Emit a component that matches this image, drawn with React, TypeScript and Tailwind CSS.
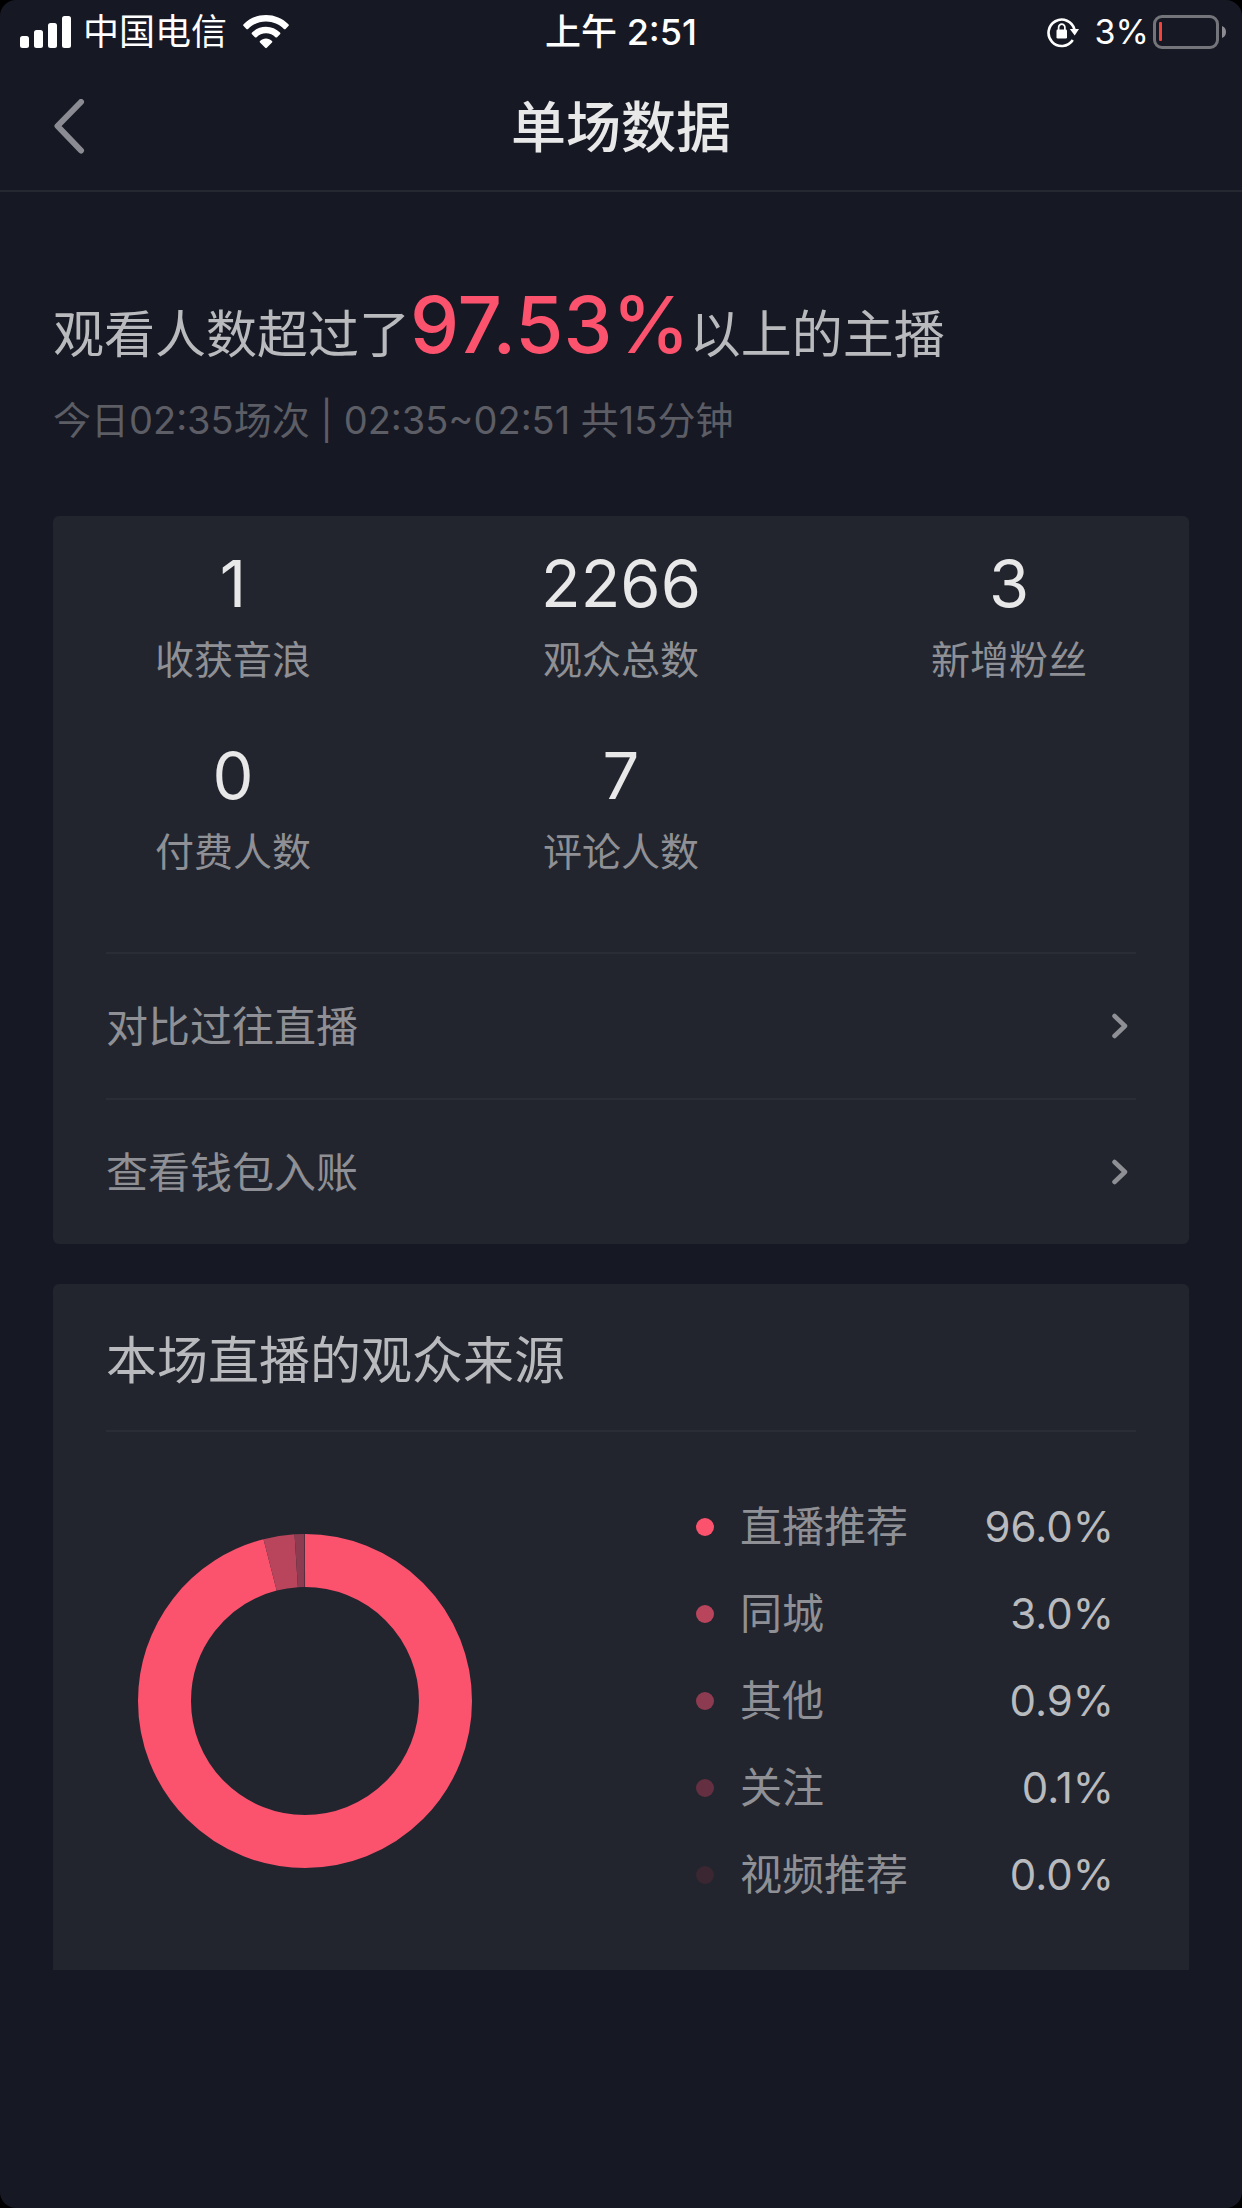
const stats = [
  { value: "1", label: "收获音浪" },
  { value: "2266", label: "观众总数" },
  { value: "3", label: "新增粉丝" },
  { value: "0", label: "付费人数" },
  { value: "7", label: "评论人数" },
];

const links = ["对比过往直播", "查看钱包入账"];

const sources = [
  { name: "直播推荐", percent: 96.0, color: "#fb526e" },
  { name: "同城", percent: 3.0, color: "#b9455d" },
  { name: "其他", percent: 0.9, color: "#8d3b50" },
  { name: "关注", percent: 0.1, color: "#642f40" },
  { name: "视频推荐", percent: 0.0, color: "#3a2732" },
];

const StatusBar = () => (
  <div className="flex h-[60px] items-center px-4 pt-1 text-[36px] leading-[40px] text-white">
    <div className="flex flex-1 items-center pl-1">
      <svg className="mr-3 h-8 w-[51px]" viewBox="0 0 51 32" fill="currentColor" aria-hidden="true">
        <rect x="0" y="20" width="9" height="12" rx="2.5" />
        <rect x="14" y="14" width="9" height="18" rx="2.5" />
        <rect x="28" y="7" width="9" height="25" rx="2.5" />
        <rect x="42" y="0" width="9" height="32" rx="2.5" />
      </svg>
      <span>中国电信</span>
      <svg className="ml-4 h-[34px] w-[46px]" viewBox="0 0 46 34" fill="currentColor" aria-hidden="true">
        <path d="M0.6 9.2C6.4 3.4 14.3 0 23 0s16.600 3.400 22.400 9.200c.6.600.6 1.300 0 1.900l-2.800 2.800c-.5.500-1.200.5-1.700 0C36.300 9.300 30 6.500 23 6.500S9.700 9.300 5.100 13.900c-.5.500-1.200.5-1.700 0L.6 11.100c-.6-.6-.6-1.300 0-1.900z" />
        <path d="M9 17.600C12.600 14 17.500 11.800 23 11.800s10.400 2.200 14 5.800c.5.500.5 1.200 0 1.700l-2.900 2.900c-.5.500-1.200.5-1.700 0C30 19.700 26.700 18.200 23 18.200s-7 1.500-9.400 4c-.5.500-1.200.5-1.700 0L9 19.300c-.5-.5-.5-1.200 0-1.700z" />
        <path d="M17 26c1.600-1.500 3.700-2.500 6-2.500s4.400 1 6 2.500c.5.500.5 1.100 0 1.600l-5.200 5.200c-.5.500-1.100.5-1.600 0L17 27.600c-.5-.5-.5-1.100 0-1.600z" />
      </svg>
    </div>
    <span className="pr-1 font-medium">上午 2:51</span>
    <div className="flex flex-1 items-center justify-end">
      <svg className="mr-4 h-8 w-8" viewBox="0 0 32 32" fill="none" aria-hidden="true">
        <path d="M25.800 24A13.200 13.200 0 1 1 27.500 13.500" stroke="currentColor" strokeWidth="2.600" />
        <path d="M22.800 13h9.200l-4.300 6.600z" fill="currentColor" />
        <rect x="9.500" y="13.500" width="10.500" height="9" rx="1.300" fill="currentColor" />
        <path d="M11.600 14v-2.500a3.150 3.400 0 0 1 6.300 0V14" stroke="currentColor" strokeWidth="1.700" />
      </svg>
      <span className="text-[34px]">3%</span>
      <svg className="ml-1 h-[34px] w-[73px]" viewBox="0 0 73 34" fill="none" aria-hidden="true">
        <rect x="1.500" y="1.500" width="63" height="31" rx="7.500" stroke="#74757b" strokeWidth="3" />
        <path d="M69 11a6.500 6.500 0 0 1 0 12z" fill="#8b8b91" />
        <rect x="6" y="7" width="3" height="19" rx="1" fill="#f2453d" />
      </svg>
    </div>
  </div>
);

const Header = () => (
  <header className="flex h-[132px] items-center border-b-2 border-[#252731] px-[53px] pt-1">
    <div className="flex flex-1">
      <button type="button" aria-label="返回" className="text-[#8b8c93]">
        <svg className="h-14 w-8" viewBox="0 0 32 56" fill="none" stroke="currentColor" strokeWidth="6" strokeLinecap="round" strokeLinejoin="round">
          <path d="M28 3L4.500 27 28 51.500" />
        </svg>
      </button>
    </div>
    <h1 className="text-[55px] leading-[64px] font-medium text-[#e8e8e9]">单场数据</h1>
    <div className="flex-1" />
  </header>
);

const Donut = () => {
  let start = 0;
  return (
    <svg className="h-[334px] w-[334px]" viewBox="0 0 334 334" fill="none" role="img" aria-label="观众来源">
      <g transform="rotate(-90 167 167)">
        {sources.map((s) => {
          const offset = start;
          start += s.percent;
          if (!s.percent) return null;
          return (
            <circle
              key={s.name}
              cx="167"
              cy="167"
              r="140.500"
              pathLength="100"
              stroke={s.color}
              strokeWidth="53"
              strokeDasharray={`${s.percent} ${100 - s.percent}`}
              strokeDashoffset={-offset}
            />
          );
        })}
      </g>
    </svg>
  );
};

const App = () => {
  return (
    <div className="min-h-screen bg-black font-['Inter','Noto_Sans_CJK_SC',sans-serif]">
      <div className="min-h-screen rounded-2xl bg-[#161823]">
        <StatusBar />
        <Header />

        <main className="px-[53px] pt-[85px]">
          <p className="text-[51px] leading-[96px] text-[#b9babd]">
            观看人数超过了<span className="text-[78px] font-medium text-[#fb526e]">97.53%</span>以上的主播
          </p>
          <p className="text-[38px] leading-[74px] text-[#5c5d65]">今日02:35场次 | 02:35~02:51 共15分钟</p>

          <section className="mt-[59px] rounded-md bg-[#22252e]">
            <div className="grid grid-cols-[auto_auto_auto] justify-between gap-y-10 px-[102px] pt-6 pb-[68px] text-center">
              {stats.map((s) => (
                <div key={s.label}>
                  <div className="text-[65px] leading-[88px] text-[#e8e8e9]">{s.value}</div>
                  <div className="text-[39px] leading-[64px] text-[#8f9095]">{s.label}</div>
                </div>
              ))}
            </div>
            <div className="px-[53px]">
              {links.map((label) => (
                <a
                  key={label}
                  href="#"
                  className="flex h-[146px] items-center justify-between border-t-2 border-[#2b2d36] pr-2 text-[42px] text-[#8f9095]"
                >
                  {label}
                  <svg className="h-[26px] w-4" viewBox="0 0 16 26" fill="none" stroke="currentColor" strokeWidth="4.500" strokeLinecap="round" strokeLinejoin="round" aria-hidden="true">
                    <path d="M2.500 3L13 13 2.500 23" />
                  </svg>
                </a>
              ))}
            </div>
          </section>

          <section className="mt-10 rounded-t-md bg-[#22252e] px-[53px] pb-[74px]">
            <h2 className="border-b-2 border-[#2b2d36] pt-11 pb-9 text-[51px] leading-[66px] text-[#b9babd]">本场直播的观众来源</h2>
            <div className="flex items-center justify-between pt-[74px] pr-[22px] pl-8">
              <Donut />
              <ul className="flex w-[418px] flex-col gap-[45px] text-[42px] leading-[42px]">
                {sources.map((s) => (
                  <li key={s.name} className="flex items-center">
                    <span className="mr-[26px] h-[18px] w-[18px] rounded-full" style={{ backgroundColor: s.color }} />
                    <span className="text-[#8f9095]">{s.name}</span>
                    <span className="ml-auto text-[#b9babd]">{s.percent.toFixed(1)}%</span>
                  </li>
                ))}
              </ul>
            </div>
          </section>
        </main>
      </div>
    </div>
  );
};

export default App;
